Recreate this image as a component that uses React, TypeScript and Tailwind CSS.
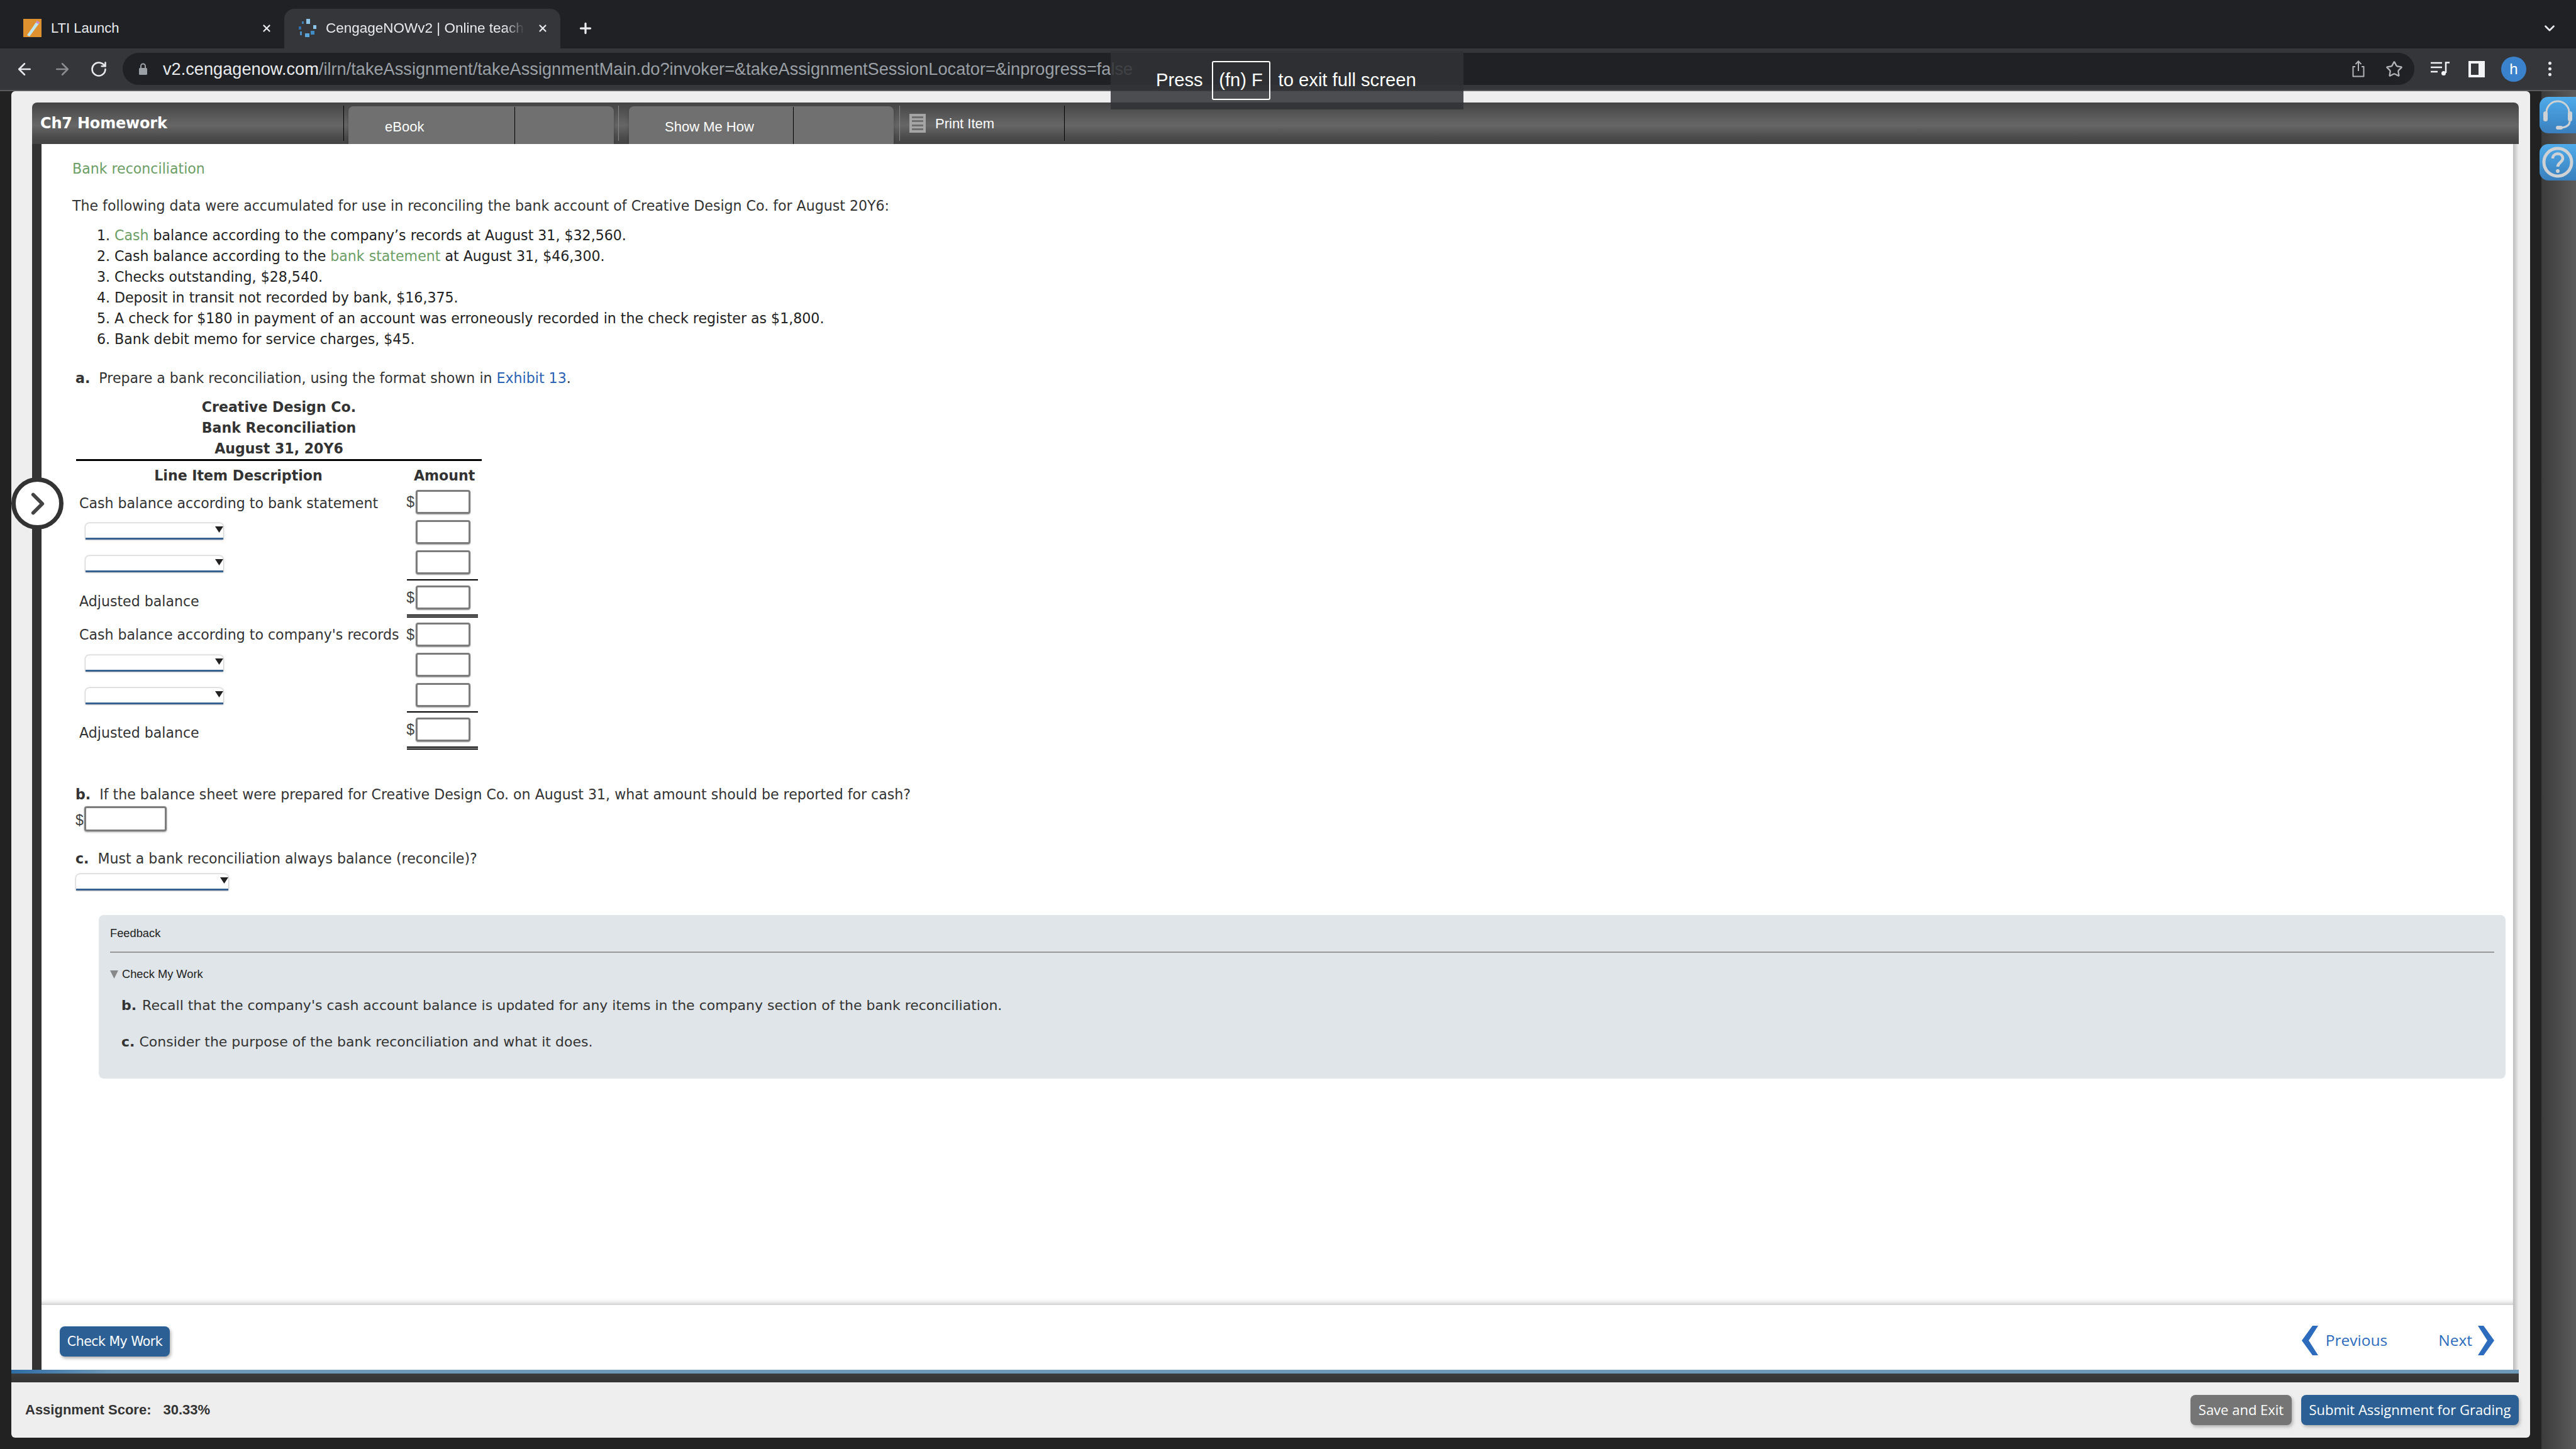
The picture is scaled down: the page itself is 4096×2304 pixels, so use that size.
import React from "react";
import { ArrowLeft, ArrowRight, RotateCw, Star, X, Plus, ChevronDown, ChevronRight } from "lucide-react";

const arial = "[font-family:'Liberation_Sans',sans-serif]";

function Amount({ dollar }: { dollar?: boolean }) {
  return (
    <div className="flex w-[120px] items-start">
      <span className={`${arial} w-[15px] text-[23px] leading-[38px] text-[#444]`}>{dollar ? "$" : ""}</span>
      <div className="h-[38px] w-[87px] rounded-[4px] border-[3px] border-[#7c7c7c] bg-white shadow-[0_1px_2px_#999]" />
    </div>
  );
}

function Select({ w }: { w: string }) {
  return (
    <div className={`${w} relative h-[26px] rounded-t-[6px] border-b-[3px] border-[#3a6290] bg-white shadow-[0_0_3px_#888]`}>
      <svg className="absolute right-0 top-[5px] h-[10px] w-[13px]" viewBox="0 0 13 10">
        <polygon points="0,0 13,0 6.5,10" fill="#222" />
      </svg>
    </div>
  );
}

function Line({ double }: { double?: boolean }) {
  return double ? (
    <div className="ml-[526px] h-[5px] w-[113px] border-y-2 border-black" />
  ) : (
    <div className="ml-[526px] h-[2px] w-[113px] bg-black" />
  );
}

function Favicon() {
  return (
    <svg className="h-[29px] w-[30px] shrink-0" viewBox="0 0 30 29">
      <rect x="13" y="0" width="6" height="8" fill="#8cc4e8" />
      <rect x="6" y="4" width="3" height="4" fill="#3f7fb5" />
      <rect x="1" y="12" width="4" height="5" fill="#2f6ea8" />
      <rect x="3" y="20" width="3" height="6" fill="#4c8fc4" />
      <rect x="11" y="23" width="7" height="6" fill="#5aa7d8" />
      <rect x="20" y="19" width="6" height="6" fill="#3f8cc4" />
      <rect x="24" y="10" width="5" height="6" fill="#8cc4e8" />
    </svg>
  );
}

export default function App() {
  return (
    <div className="relative flex h-[2304px] w-[4096px] flex-col overflow-hidden bg-[#222] text-[#333] [font-family:'DejaVu_Sans',sans-serif]">
      {/* Tab strip */}
      <div className={`${arial} flex h-[77px] items-end bg-[#202124] text-[22px] text-[#e8eaed]`}>
        <div className="flex h-[63px] w-[452px] items-center pb-[2px] pl-[37px]">
          <svg className="h-[29px] w-[29px] shrink-0" viewBox="0 0 29 29">
            <rect width="29" height="29" fill="#e0912f" />
            <polygon points="6,26 22,3 26,6 10,28" fill="#bfe6ef" />
            <polygon points="22,3 26,6 24,8 20,6" fill="#c583d6" />
          </svg>
          <span className="ml-[15px]">LTI Launch</span>
          <X className="ml-auto mr-[19px] h-[18px] w-[18px]" strokeWidth={3} />
        </div>
        <div className="flex h-[63px] w-[439px] items-center rounded-t-[16px] bg-[#35363a] pb-[2px] pl-[22px]">
          <Favicon />
          <span className="ml-[14px] w-[316px] overflow-hidden whitespace-nowrap text-[22.500px] [mask-image:linear-gradient(90deg,#000_90%,transparent)]">CengageNOWv2 | Online teach</span>
          <X className="ml-[20px] h-[18px] w-[18px]" strokeWidth={3} />
        </div>
        <div className="flex h-[63px] items-center pb-[2px] pl-[27px]">
          <Plus className="h-[26px] w-[26px]" strokeWidth={3} />
        </div>
        <div className="ml-auto flex h-[63px] items-center pb-[2px] pr-[29px]">
          <ChevronDown className="h-[26px] w-[26px]" strokeWidth={2.5} />
        </div>
      </div>

      {/* Toolbar */}
      <div className="flex h-[68px] items-center border-b-2 border-[#5a5b5f] bg-[#35363a] pb-[1px]">
        <ArrowLeft className="ml-[24px] h-[30px] w-[30px] text-[#e8eaed]" strokeWidth={2} />
        <ArrowRight className="ml-[30px] h-[30px] w-[30px] text-[#8b8d91]" strokeWidth={2} />
        <RotateCw className="ml-[29px] h-[28px] w-[28px] text-[#e8eaed]" strokeWidth={2.2} />
        <div className="ml-[24px] flex h-[51px] w-[3644px] items-center rounded-full bg-[#202124] pl-[25px]">
          <svg className="h-[19px] w-[15px] shrink-0" viewBox="0 0 15 19">
            <path d="M4 8V5a3.5 3.5 0 0 1 7 0v3" fill="none" stroke="#9aa0a6" strokeWidth="2" />
            <rect x="1" y="8" width="13" height="11" rx="1.5" fill="#9aa0a6" />
          </svg>
          <span className={`${arial} ml-[24px] whitespace-nowrap pt-[1px] text-[27.200px] text-[#9aa0a6]`}>
            <span className="text-[#e8eaed]">v2.cengagenow.com</span>
            /ilrn/takeAssignment/takeAssignmentMain.do?invoker=&takeAssignmentSessionLocator=&inprogress=false
          </span>
          <svg className="ml-auto h-[27px] w-[20px] shrink-0" viewBox="0 0 20 27" fill="none" stroke="#b0b2b5" strokeWidth="2">
            <path d="M5 10H1.5v15.5h17V10H15" strokeLinejoin="round" />
            <path d="M10 17V1.5M5.5 6 10 1.5 14.500 6" />
          </svg>
          <Star className="ml-[33px] mr-[18px] h-[28px] w-[28px] text-[#b0b2b5]" strokeWidth={2} />
        </div>
        <svg className="ml-[26px] h-[23px] w-[30px] shrink-0" viewBox="0 0 30 23" fill="none" stroke="#f1f3f4" strokeWidth="2.500">
          <path d="M0 2h18M0 9h18M0 16h11M24 18V1.500h6" />
          <circle cx="20.500" cy="18.500" r="3.500" fill="#f1f3f4" stroke="none" />
        </svg>
        <svg className="ml-[30px] h-[26px] w-[26px] shrink-0" viewBox="0 0 26 26">
          <rect width="26" height="26" fill="#f1f3f4" />
          <rect x="4" y="4" width="12" height="18" fill="#35363a" />
        </svg>
        <div className={`${arial} ml-[26px] flex h-[40px] w-[40px] shrink-0 items-center justify-center rounded-full bg-[#3a82cc] text-[24px] text-white`}>h</div>
        <div className="ml-[35px] flex flex-col gap-[4px]">
          <div className="h-[5px] w-[5px] rounded-full bg-[#e8eaed]" />
          <div className="h-[5px] w-[5px] rounded-full bg-[#e8eaed]" />
          <div className="h-[5px] w-[5px] rounded-full bg-[#e8eaed]" />
        </div>
      </div>

      {/* Page */}
      <div className="flex flex-1">
        <div className="w-[18px] shrink-0" />
        <div className="flex h-[2141px] w-[4005px] flex-col rounded-[6px] bg-[#eeeeee] pr-[18px] pt-[18px]">
          {/* Activity header */}
          <div className="ml-[33px] flex h-[66px] rounded-t-[8px] bg-[linear-gradient(180deg,#444_0%,#5a5a5a_35%,#666_55%,#4a4a4a_85%,#444_100%)] text-white">
            <div className="flex w-[495px] items-center pl-[13px] text-[24px] font-bold tracking-[-0.2px]">Ch7 Homework</div>
            <div className="my-[5px] w-[1px] bg-black" />
            <div className={`${arial} ml-[7px] mt-[6px] flex h-[60px] w-[422px] rounded-t-[8px] bg-[#707070] text-[22px] shadow-[0_3px_4px_rgba(0,0,0,0.25)]`}>
              <div className="flex w-[264px] items-center pl-[58px] pt-[4px]">eBook</div>
              <div className="mt-[1px] w-[1px] bg-black" />
            </div>
            <div className="my-[5px] ml-[7px] w-[1px] bg-[#888]" />
            <div className={`${arial} ml-[16px] mt-[6px] flex h-[60px] w-[421px] rounded-t-[8px] bg-[#707070] text-[22px] shadow-[0_3px_4px_rgba(0,0,0,0.25)]`}>
              <div className="flex w-[261px] items-center pl-[57px] pt-[4px]">Show Me How</div>
              <div className="mt-[1px] w-[1px] bg-black" />
            </div>
            <div className="my-[5px] ml-[9px] w-[1px] bg-[#888]" />
            <div className={`${arial} flex w-[261px] items-center pl-[15px] text-[22px]`}>
              <div className="flex h-[30px] w-[26px] flex-col justify-evenly bg-[#a5a5a5] px-[4px]">
                <div className="h-[3px] bg-[#6e6e6e]" />
                <div className="h-[3px] bg-[#6e6e6e]" />
                <div className="h-[3px] bg-[#6e6e6e]" />
                <div className="h-[3px] bg-[#6e6e6e]" />
              </div>
              <span className="ml-[15px]">Print Item</span>
            </div>
            <div className="my-[5px] w-[1px] bg-black" />
          </div>

          {/* Question area */}
          <div className="ml-[33px] flex h-[1846px]">
            <div className="w-[15px] shrink-0 bg-[#333]" />
            <div className="flex-1 bg-white pl-[49px] pt-[23px] text-[22.100px] leading-[33px] shadow-[inset_0_-8px_8px_-6px_#bbb]">
              <div className="text-[#6c9e66]">Bank reconciliation</div>
              <div className="mt-[26px]">The following data were accumulated for use in reconciling the bank account of Creative Design Co. for August 20Y6:</div>
              <ol className="ml-[77px] mt-[14px] list-decimal text-[#222]">
                <li className="-ml-[10px]"><span className="text-[#6c9e66]">Cash</span> balance according to the company’s records at August 31, $32,560.</li>
                <li className="-ml-[10px]">Cash balance according to the <span className="text-[#6c9e66]">bank statement</span> at August 31, $46,300.</li>
                <li className="-ml-[10px]">Checks outstanding, $28,540.</li>
                <li className="-ml-[10px]">Deposit in transit not recorded by bank, $16,375.</li>
                <li className="-ml-[10px]">A check for $180 in payment of an account was erroneously recorded in the check register as $1,800.</li>
                <li className="-ml-[10px]">Bank debit memo for service charges, $45.</li>
              </ol>
              <div className="ml-[5px] mt-[29px]"><b>a.</b>&nbsp; Prepare a bank reconciliation, using the format shown in <span className="text-[#2c62b4]">Exhibit 13</span>.</div>

              {/* Reconciliation table */}
              <div className="ml-[6px] mt-[13px] w-[645px]">
                <div className="border-b-[3px] border-black text-center font-bold">
                  <div>Creative Design Co.</div>
                  <div>Bank Reconciliation</div>
                  <div>August 31, 20Y6</div>
                </div>
                <div className="flex h-[46px] items-center font-bold">
                  <div className="w-[526px] pr-[10px] text-center">Line Item Description</div>
                  <div className="ml-[11px]">Amount</div>
                </div>
                <div className="flex h-[48px]"><div className="w-[526px] pl-[5px] pt-[5px]">Cash balance according to bank statement</div><Amount dollar /></div>
                <div className="flex h-[48px]"><div className="w-[526px] pl-[15px] pt-[5px]"><Select w="w-[219px]" /></div><Amount /></div>
                <div className="flex h-[46px]"><div className="w-[526px] pl-[15px] pt-[9px]"><Select w="w-[219px]" /></div><Amount /></div>
                <Line />
                <div className="flex h-[54px] pt-[8px]"><div className="-mt-[8px] w-[526px] pl-[5px] pt-[17px]">Adjusted balance</div><Amount dollar /></div>
                <Line double />
                <div className="flex h-[56px] pt-[8px]"><div className="-mt-[8px] w-[526px] pl-[5px] pt-[11px]">Cash balance according to company's records</div><Amount dollar /></div>
                <div className="flex h-[48px]"><div className="w-[526px] pl-[15px] pt-[4px]"><Select w="w-[219px]" /></div><Amount /></div>
                <div className="flex h-[45px]"><div className="w-[526px] pl-[15px] pt-[8px]"><Select w="w-[219px]" /></div><Amount /></div>
                <Line />
                <div className="flex h-[54px] pt-[8px]"><div className="-mt-[8px] w-[526px] pl-[5px] pt-[16px]">Adjusted balance</div><Amount dollar /></div>
                <Line double />
              </div>

              <div className="ml-[5px] mt-[55px]"><b>b.</b>&nbsp; If the balance sheet were prepared for Creative Design Co. on August 31, what amount should be reported for cash?</div>
              <div className="ml-[5px] mt-[2px] flex h-[40px] items-center">
                <span className={`${arial} w-[14px] pt-[4px] text-[23px] text-[#444]`}>$</span>
                <div className="h-[40px] w-[131px] rounded-[4px] border-[3px] border-[#7c7c7c] bg-white shadow-[0_1px_3px_#999]" />
              </div>
              <div className="ml-[5px] mt-[27px]"><b>c.</b>&nbsp; Must a bank reconciliation always balance (reconcile)?</div>
              <div className="ml-[6px] mt-[8px]"><Select w="w-[242px]" /></div>

              {/* Feedback */}
              <div className="ml-[42px] mt-[39px] h-[260px] w-[3827px] rounded-[8px] bg-[#dfe5e8] px-[18px] pt-[17px] text-[22px]">
                <div className={`${arial} text-[18.300px] leading-[24px] text-[#222]`}>Feedback</div>
                <div className="mt-[17px] h-[2px] bg-[#999]" />
                <div className={`${arial} mt-[22px] flex items-center text-[18.300px] leading-[24px] text-[#222]`}>
                  <svg className="mr-[6px] h-[13px] w-[13px]" viewBox="0 0 13 13"><polygon points="0,0 13,0 6.500,13" fill="#888" /></svg>
                  Check My Work
                </div>
                <div className="ml-[18px] mt-[21px]"><b className="mr-[2px]">b.</b> Recall that the company's cash account balance is updated for any items in the company section of the bank reconciliation.</div>
                <div className="ml-[18px] mt-[25px]"><b>c.</b> Consider the purpose of the bank reconciliation and what it does.</div>
              </div>
            </div>
            <div className="w-[9px] shrink-0 bg-linear-to-r from-[#bbb] to-[#eee]" />
          </div>

          {/* Navigation footer */}
          <div className="ml-[33px] flex h-[103px]">
            <div className="w-[15px] shrink-0 bg-[#333]" />
            <div className="flex flex-1 items-start justify-between bg-white pl-[29px] pr-[30px] pt-[34px]">
              <div className="flex h-[48px] w-[175px] items-center justify-center rounded-[8px] bg-[#2c5f94] text-[20.500px] tracking-[-0.5px] text-white shadow-[2px_3px_5px_rgba(0,0,0,0.3)]">Check My Work</div>
              <div className="-mt-[1px] flex items-center text-[24.500px] text-[#2d6bbd] [font-family:'Open_Sans',sans-serif]">
                <svg className="h-[47px] w-[26px]" viewBox="0 0 26 47"><polygon points="17,0 26,0 11,23.500 26,47 17,47 0,23.500" fill="#2d6bbd" /></svg>
                <span className="ml-[12px]">Previous</span>
                <span className="ml-[81px]">Next</span>
                <svg className="ml-[9px] h-[47px] w-[26px]" viewBox="0 0 26 47"><polygon points="0,0 9,0 26,23.500 9,47 0,47 15,23.500" fill="#2d6bbd" /></svg>
              </div>
            </div>
            <div className="w-[9px] shrink-0 bg-linear-to-r from-[#bbb] to-[#eee]" />
          </div>

          <div className="h-[6px] bg-linear-to-r from-[#2e6da4] from-[0%] to-[#6d98b8] to-[4%]" />
          <div className="h-[14px] bg-linear-to-b from-[#3c3c3c] to-[#333]" />

          {/* Score bar */}
          <div className="flex h-[88px] items-center pb-[1px] pl-[22px]">
            <span className={`${arial} text-[22px] font-bold text-[#333]`}>Assignment Score:</span>
            <span className={`${arial} ml-[19px] text-[22px] font-bold text-[#333]`}>30.33%</span>
            <div className="ml-auto flex h-[48px] w-[161px] items-center justify-center rounded-[8px] bg-[#757575] text-[22px] text-white shadow-[2px_3px_5px_rgba(0,0,0,0.25)] [font-family:'Open_Sans',sans-serif]">Save and Exit</div>
            <div className="ml-[15px] flex h-[48px] w-[346px] items-center justify-center rounded-[8px] bg-[#2c5f94] text-[22px] text-white shadow-[2px_3px_5px_rgba(0,0,0,0.25)] [font-family:'Open_Sans',sans-serif]">Submit Assignment for Grading</div>
          </div>
        </div>
        <div className="w-[18px] shrink-0" />
        <div className="flex-1 bg-linear-to-r from-[#3b3b3b] to-[#5c5c5c]" />
      </div>

      {/* Expand handle */}
      <div className="absolute left-[18px] top-[759px] flex h-[83px] w-[83px] items-center justify-center rounded-full border-[7px] border-[#333] bg-white">
        <ChevronRight className="h-[58px] w-[58px] text-[#444]" strokeWidth={2.4} />
      </div>

      {/* Side tabs */}
      <div className="absolute left-[4038px] top-[154px] flex h-[58px] w-[58px] items-center justify-center rounded-l-[14px] bg-linear-to-b from-[#4fabea] to-[#3a7fbd]">
        <svg className="h-[50px] w-[50px]" viewBox="0 0 50 50" fill="none" stroke="#cfd2d5" strokeWidth="3">
          <path d="M7 25V21a18 18 0 0 1 36 0v4" />
          <rect x="2" y="19" width="7" height="16" rx="3.500" fill="#cfd2d5" stroke="none" />
          <rect x="41" y="19" width="7" height="16" rx="3.500" fill="#cfd2d5" stroke="none" />
          <path d="M44 35c0 6-6 9-12 10" />
          <rect x="22" y="42" width="11" height="6" rx="3" fill="#cfd2d5" stroke="none" />
        </svg>
      </div>
      <div className="absolute left-[4038px] top-[229px] flex h-[58px] w-[58px] items-center justify-center rounded-l-[14px] bg-linear-to-b from-[#4fabea] to-[#3a7fbd]">
        <svg className="h-[52px] w-[52px]" viewBox="0 0 52 52" fill="none" stroke="#cfd2d5">
          <circle cx="26" cy="26" r="22" strokeWidth="5" />
          <path d="M18 20c0-10 16-10 16 0 0 6-8 6-8 13" strokeWidth="4.500" />
          <circle cx="26" cy="40" r="3" fill="#cfd2d5" stroke="none" />
        </svg>
      </div>

      {/* Fullscreen bubble */}
      <div className={`${arial} absolute left-[1766px] top-[81px] flex h-[93px] w-[561px] items-center bg-[rgba(49,50,54,0.86)] pl-[72px] text-[29.200px] text-white`}>
        <span>Press</span>
        <span className="ml-[14px] flex h-[62px] w-[93px] items-center justify-center rounded-[3px] border-2 border-white">(fn) F</span>
        <span className="ml-[13px]">to exit full screen</span>
      </div>
    </div>
  );
}
